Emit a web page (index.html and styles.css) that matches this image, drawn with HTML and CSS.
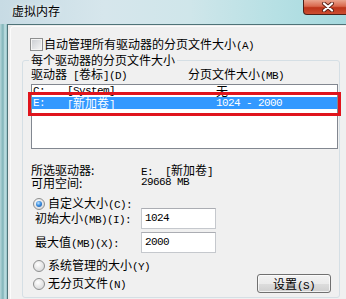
FILE: index.html
```html
<!DOCTYPE html>
<html>
<head>
<meta charset="utf-8">
<link rel="stylesheet" href="styles.css">
</head>
<body>
<div class="titlebar">
  <span class="title">虚拟内存</span>
  <div class="close">
    <svg width="14" height="10" viewBox="0 0 14 10"><path d="M3 1.5 L11 8.5 M11 1.5 L3 8.5" stroke="#5a2116" stroke-width="4" stroke-linecap="round"/><path d="M3 1.5 L11 8.5 M11 1.5 L3 8.5" stroke="#fff" stroke-width="2.2" stroke-linecap="round"/></svg>
  </div>
</div>
<div class="frame">
  <div class="frame-left"></div>
  <div class="client">
    <div class="inner">
      <div class="check-row"><span class="checkbox"></span><span>自动管理所有驱动器的分页文件大小<span class="m">(A)</span></span></div>
      <div class="group">
        <div class="legend">每个驱动器的分页文件大小</div>
        <div class="cols"><span>驱动器<span class="m"> [</span>卷标<span class="m">](D)</span></span><span>分页文件大小<span class="m">(MB)</span></span></div>
        <div class="list">
          <div class="row"><span class="m">C:</span><span class="m">[System]</span><span>无</span></div>
          <div class="row sel"><span class="m">E:</span><span><span class="m">[</span>新加卷<span class="m">]</span></span><span class="m">1024 - 2000</span></div>
          <div class="mark"></div>
        </div>
        <div class="info">
          <span>所选驱动器:</span><span><span class="m">E:  [</span>新加卷<span class="m">]</span></span>
          <span>可用空间:</span><span class="m">29668 MB</span>
        </div>
        <div class="radio-row first"><span class="radio on"></span><span>自定义大小<span class="m">(C):</span></span></div>
        <div class="field-row r1"><span class="flabel">初始大小<span class="m">(MB)(I):</span></span><span class="input m">1024</span></div>
        <div class="field-row r2"><span class="flabel">最大值<span class="m">(MB)(X):</span></span><span class="input m">2000</span></div>
        <div class="radio-row second"><span class="radio"></span><span>系统管理的大小<span class="m">(Y)</span></span></div>
        <div class="last-row">
          <div class="radio-row"><span class="radio"></span><span>无分页文件<span class="m">(N)</span></span></div>
          <div class="btn">设置<span class="m">(S)</span></div>
        </div>
      </div>
    </div>
  </div>
</div>
</body>
</html>
```
FILE: styles.css
```css
html, body {
  margin: 0;
  padding: 0;
}
body {
  width: 346px;
  height: 299px;
  overflow: hidden;
  font-family: "Noto Sans CJK SC", sans-serif;
  font-size: 12px;
  color: #000;
  background: #f0f0f0;
}
.m {
  font-family: "Liberation Mono", monospace;
  font-size: 11px;
  letter-spacing: -0.6px;
  white-space: pre;
}
.titlebar {
  height: 24px;
  display: flex;
  justify-content: space-between;
  align-items: flex-start;
  overflow: hidden;
  background: linear-gradient(to right, #c7dbe4 0%, #d6e6ec 30%, #cfe6ea 55%, #b6e0e4 80%, #a5d9de 100%);
}
.title {
  margin: 4px 0 0 12px;
  line-height: 14px;
  font-size: 12px;
  text-shadow: 0 0 5px rgba(255,255,255,0.9);
}
.close {
  width: 45px;
  height: 15px;
  margin-right: -2px;
  padding-left: 4px;
  box-sizing: border-box;
  border: 1px solid #4d2018;
  border-top: none;
  border-radius: 0 0 0 4px;
  background: linear-gradient(#eaa58f 0%, #d9684d 45%, #bd3419 55%, #cc4d31 100%);
  display: flex;
  align-items: center;
  justify-content: center;
}
.close svg { display: block; }
.frame {
  display: flex;
  height: 275px;
}
.frame-left {
  width: 7px;
  background: linear-gradient(to right, #b5d6da 0, #7fb3b8 3px, #c3e1e4 5px, #93c2c7 7px);
}
.client {
  flex: 1;
  border-top: 1px solid #4f7378;
  border-left: 1px solid #4f7378;
  background: #ececec;
}
.inner {
  margin: 1px 0 0 2px;
  height: 100%;
  border-top: 1px solid #fbfbfb;
  border-left: 1px solid #fbfbfb;
  border-top-left-radius: 4px;
  background: #f0f0f0;
}
.check-row {
  margin: 11px 0 0 19px;
  display: flex;
  align-items: center;
  gap: 1px;
  height: 13px;
  line-height: 13px;
}
.checkbox {
  width: 13px;
  height: 13px;
  box-sizing: border-box;
  border: 1px solid #8e8f8f;
  background: linear-gradient(135deg, #c9ccd1, #f6f6f6);
  box-shadow: inset 0 0 0 1px #f4f4f4;
}
.group {
  margin: 9px 0 0 11px;
  width: 318px;
  box-sizing: border-box;
  border: 1px solid #d5dfe5;
  border-radius: 3px;
  padding: 0 1px 4px 8px;
}
.legend {
  display: block;
  width: max-content;
  margin: -8px 0 0 -2px;
  padding: 0 2px;
  background: #f0f0f0;
  line-height: 13px;
  height: 13px;
}
.cols {
  display: grid;
  grid-template-columns: 157px 1fr;
  margin-top: 1px;
  height: 13px;
  line-height: 13px;
}
.list {
  position: relative;
  margin-top: 4px;
  width: 307px;
  height: 65px;
  box-sizing: border-box;
  border: 1px solid #828790;
  background: #fff;
}
.row {
  display: grid;
  grid-template-columns: 34px 149px 1fr;
  height: 12px;
  line-height: 12px;
  padding-left: 1px;
  white-space: nowrap;
}
.row.sel {
  background: #3399ff;
  color: #fff;
}
.mark {
  position: absolute;
  left: -4px;
  top: 7px;
  width: 313px;
  height: 24px;
  box-sizing: border-box;
  border: 3px solid #e0141c;
}
.info {
  display: grid;
  grid-template-columns: 110px 1fr;
  grid-auto-rows: 13px;
  line-height: 13px;
  margin-top: 14px;
}
.radio-row {
  display: flex;
  align-items: center;
  gap: 3px;
  height: 13px;
  line-height: 13px;
  padding-left: 2px;
}
.radio-row.first { margin-top: 8px; }
.radio-row.second { margin-top: 6px; }
.radio {
  position: relative;
  width: 12px;
  height: 12px;
  box-sizing: border-box;
  border: 1px solid #8e8f8f;
  border-radius: 50%;
  background: radial-gradient(circle at 40% 35%, #ffffff 0%, #e9e9e9 45%, #cfd1d4 100%);
}
.radio.on::after {
  content: "";
  position: absolute;
  left: 2px;
  top: 2px;
  width: 6px;
  height: 6px;
  border-radius: 50%;
  background: radial-gradient(circle at 40% 35%, #bfe4ff 0%, #3d8fe0 45%, #0f4a9c 100%);
}
.field-row {
  display: grid;
  grid-template-columns: 110px 75px;
  align-items: center;
  height: 21px;
  line-height: 13px;
}
.field-row.r1 { margin-top: -2px; }
.field-row.r2 { margin-top: 3px; }
.flabel { padding-left: 4px; }
.input {
  height: 21px;
  box-sizing: border-box;
  border: 1px solid #c5c8cd;
  border-top-color: #abadb3;
  background: #fff;
  padding-left: 3px;
  line-height: 19px;
}
.last-row {
  display: flex;
  justify-content: space-between;
  align-items: center;
  margin-top: 2px;
}
.btn {
  width: 74px;
  height: 19px;
  margin-right: 7px;
  box-sizing: border-box;
  border: 1px solid #707070;
  border-radius: 3px;
  background: linear-gradient(#f2f2f2 0%, #ebebeb 50%, #dddddd 51%, #cfcfcf 100%);
  box-shadow: inset 0 0 0 1px rgba(255,255,255,0.7);
  text-align: center;
  line-height: 17px;
}
```
